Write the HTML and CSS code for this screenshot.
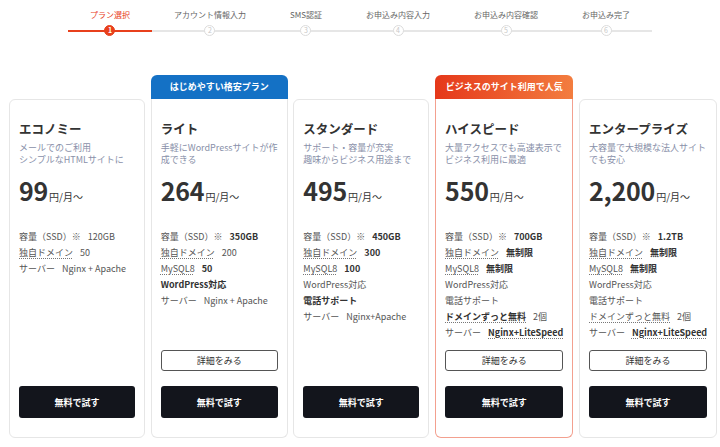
FILE: index.html
```html
<!DOCTYPE html>
<html lang="ja">
<head>
<meta charset="utf-8">
<title>プラン選択</title>
<link rel="stylesheet" href="styles.css">
</head>
<body>
<ol class="steps">
  <li class="step active"><span class="step-label">プラン選択</span><span class="step-track"><span class="step-num">1</span></span></li>
  <li class="step"><span class="step-label">アカウント情報入力</span><span class="step-track"><span class="step-num">2</span></span></li>
  <li class="step"><span class="step-label">SMS認証</span><span class="step-track"><span class="step-num">3</span></span></li>
  <li class="step"><span class="step-label">お申込み内容入力</span><span class="step-track"><span class="step-num">4</span></span></li>
  <li class="step"><span class="step-label">お申込み内容確認</span><span class="step-track"><span class="step-num">5</span></span></li>
  <li class="step"><span class="step-label">お申込み完了</span><span class="step-track"><span class="step-num">6</span></span></li>
</ol>

<div class="plans">
  <section class="plan">
    <div class="badge none"></div>
    <div class="card">
      <h2 class="title">エコノミー</h2>
      <p class="desc">メールでのご利用<br>シンプルなHTMLサイトに</p>
      <p class="price"><span class="num">99</span><span class="unit">円/月〜</span></p>
      <ul class="features">
        <li>容量（SSD）※<span class="val">120GB</span></li>
        <li><span class="dot">独自ドメイン</span><span class="val">50</span></li>
        <li>サーバー<span class="val">Nginx + Apache</span></li>
      </ul>
      <button class="trial">無料で試す</button>
    </div>
  </section>

  <section class="plan">
    <div class="badge blue">はじめやすい格安プラン</div>
    <div class="card flat">
      <h2 class="title">ライト</h2>
      <p class="desc">手軽にWordPressサイトが作<br>成できる</p>
      <p class="price"><span class="num">264</span><span class="unit">円/月〜</span></p>
      <ul class="features">
        <li>容量（SSD）※<span class="val b">350GB</span></li>
        <li><span class="dot">独自ドメイン</span><span class="val">200</span></li>
        <li><span class="dot">MySQL8</span><span class="val b">50</span></li>
        <li class="b">WordPress対応</li>
        <li>サーバー<span class="val">Nginx + Apache</span></li>
      </ul>
      <button class="detail">詳細をみる</button>
      <button class="trial">無料で試す</button>
    </div>
  </section>

  <section class="plan">
    <div class="badge none"></div>
    <div class="card">
      <h2 class="title">スタンダード</h2>
      <p class="desc">サポート・容量が充実<br>趣味からビジネス用途まで</p>
      <p class="price"><span class="num">495</span><span class="unit">円/月〜</span></p>
      <ul class="features">
        <li>容量（SSD）※<span class="val b">450GB</span></li>
        <li><span class="dot">独自ドメイン</span><span class="val b">300</span></li>
        <li><span class="dot">MySQL8</span><span class="val b">100</span></li>
        <li>WordPress対応</li>
        <li class="b">電話サポート</li>
        <li>サーバー<span class="val">Nginx+Apache</span></li>
      </ul>
      <button class="trial">無料で試す</button>
    </div>
  </section>

  <section class="plan">
    <div class="badge red">ビジネスのサイト利用で人気</div>
    <div class="card flat hot">
      <h2 class="title">ハイスピード</h2>
      <p class="desc">大量アクセスでも高速表示で<br>ビジネス利用に最適</p>
      <p class="price"><span class="num">550</span><span class="unit">円/月〜</span></p>
      <ul class="features">
        <li>容量（SSD）※<span class="val b">700GB</span></li>
        <li><span class="dot">独自ドメイン</span><span class="val b">無制限</span></li>
        <li><span class="dot">MySQL8</span><span class="val b">無制限</span></li>
        <li>WordPress対応</li>
        <li>電話サポート</li>
        <li><span class="dot b">ドメインずっと無料</span><span class="val">2個</span></li>
        <li>サーバー<span class="val b dot">Nginx+LiteSpeed</span></li>
      </ul>
      <button class="detail">詳細をみる</button>
      <button class="trial">無料で試す</button>
    </div>
  </section>

  <section class="plan">
    <div class="badge none"></div>
    <div class="card">
      <h2 class="title">エンタープライズ</h2>
      <p class="desc">大容量で大規模な法人サイト<br>でも安心</p>
      <p class="price"><span class="num">2,200</span><span class="unit">円/月〜</span></p>
      <ul class="features">
        <li>容量（SSD）※<span class="val b">1.2TB</span></li>
        <li><span class="dot">独自ドメイン</span><span class="val b">無制限</span></li>
        <li><span class="dot">MySQL8</span><span class="val b">無制限</span></li>
        <li>WordPress対応</li>
        <li>電話サポート</li>
        <li><span class="dot">ドメインずっと無料</span><span class="val">2個</span></li>
        <li>サーバー<span class="val b dot">Nginx+LiteSpeed</span></li>
      </ul>
      <button class="detail">詳細をみる</button>
      <button class="trial">無料で試す</button>
    </div>
  </section>
</div>
</body>
</html>
```

FILE: styles.css
```css
* { box-sizing: border-box; }
html, body { margin: 0; padding: 0; background: #fff; }
body {
  font-family: "Noto Sans CJK JP", "Noto Sans", sans-serif;
  color: #333;
  width: 720px;
  height: 447px;
  overflow: hidden;
}

/* progress steps */
.steps {
  list-style: none;
  margin: 0;
  padding: 9px 0 0;
  display: flex;
  justify-content: center;
}
.step {
  display: flex;
  flex-direction: column;
  align-items: center;
}
.step-label {
  padding: 0 22px;
  font-size: 8px;
  line-height: 12px;
  color: #666;
  white-space: nowrap;
}
.step-track {
  align-self: stretch;
  margin-top: 4px;
  height: 11px;
  display: flex;
  justify-content: center;
  background: linear-gradient(#e6e6e6, #e6e6e6) center / 100% 2px no-repeat;
}
.step-num {
  width: 11px;
  height: 11px;
  border-radius: 50%;
  border: 1px solid #dcdcdc;
  background: #fff;
  color: #c8c8c8;
  font-size: 7px;
  line-height: 9px;
  text-align: center;
}
.step.active .step-label { color: #e8401c; }
.step.active .step-track {
  background: linear-gradient(#e8401c, #e8401c) center / 100% 2px no-repeat;
}
.step.active .step-num {
  background: #e8401c;
  border-color: #e8401c;
  color: #fff;
  font-weight: 700;
}

/* plans */
.plans {
  display: flex;
  gap: 5.75px;
  padding-left: 9px;
  margin-top: 39px;
}
.plan {
  flex: 0 0 136px;
  display: flex;
  flex-direction: column;
}
.badge {
  height: 24px;
  border-radius: 6px 6px 0 0;
  color: #fff;
  font-size: 9px;
  font-weight: 700;
  line-height: 24px;
  text-align: center;
  white-space: nowrap;
}
.badge.blue { background: #1471c5; }
.badge.red { background: linear-gradient(90deg, #e5381a, #f37d3f); }

.card {
  height: 339px;
  border: 1px solid #e6e6e6;
  border-radius: 6px;
  padding: 20px 9px 19px;
  display: flex;
  flex-direction: column;
  background: #fff;
}
.card.flat { border-radius: 0 0 6px 6px; border-top: none; padding-top: 21px; }
.card.hot { border-color: #f3a08f; }

.title {
  margin: 0;
  font-size: 12.5px;
  line-height: 18px;
  font-weight: 700;
  color: #333;
  white-space: nowrap;
}
.desc {
  margin: 4px 0 0;
  font-size: 9px;
  line-height: 12px;
  color: #8990a9;
  white-space: nowrap;
}
.price {
  margin: 10px 0 0;
  line-height: 28px;
  white-space: nowrap;
  color: #333;
}
.num { font-size: 25px; font-weight: 700; letter-spacing: -0.2px; }
.unit { font-size: 10px; margin-left: 1px; }

.features {
  list-style: none;
  margin: 18px 0 0;
  padding: 0;
  flex: 1;
  font-size: 9px;
  line-height: 16px;
  color: #555;
  white-space: nowrap;
}
.val { margin-left: 7px; }
.b { font-weight: 700; color: #333; }
.dot {
  text-decoration: underline dotted #777;
  text-underline-offset: 2px;
}

.detail {
  display: block;
  width: 100%;
  height: 21px;
  margin: 0 0 15px;
  border: 1px solid #555;
  border-radius: 3px;
  background: #fff;
  color: #333;
  font-family: inherit;
  font-size: 9px;
  padding: 0;
}
.trial {
  display: block;
  width: 100%;
  height: 32px;
  border: none;
  border-radius: 3px;
  background: #13151c;
  color: #fff;
  font-family: inherit;
  font-size: 9px;
  font-weight: 700;
  padding: 0;
}
```
